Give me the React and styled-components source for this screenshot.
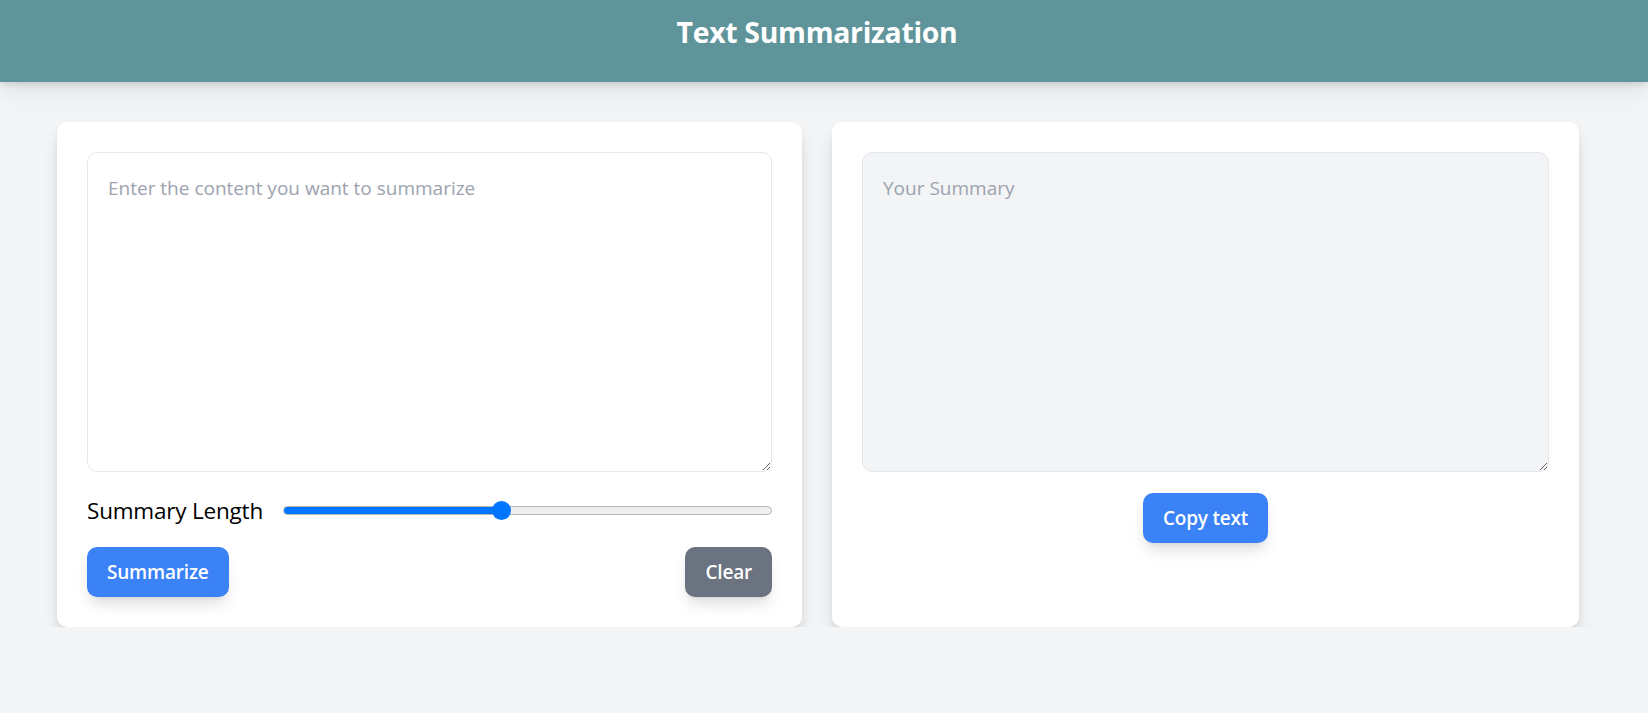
import React, { useState } from "react";
import styled, { createGlobalStyle } from "styled-components";

const GlobalStyle = createGlobalStyle`
  * {
    box-sizing: border-box;
  }

  body {
    margin: 0;
    background: #f3f4f6;
    font-family: "Open Sans", "Noto Sans", sans-serif;
  }
`;

/* 상단 헤더 */
const Header = styled.header`
  height: 82px;
  padding: 13px 14px 0 0;
  background: #5f959a;
  display: flex;
  justify-content: center;
  box-shadow: 0 4px 6px -1px rgba(0, 0, 0, 0.1), 0 8px 22px rgba(0, 0, 0, 0.08);
`;

const Title = styled.h1`
  margin: 0;
  color: #ffffff;
  font-size: 28.4px;
  font-weight: 700;
  letter-spacing: -0.3px;
`;

/* 카드 두 개 */
const Main = styled.main`
  display: grid;
  grid-template-columns: 745px 747px;
  gap: 30px;
  padding: 40px 0 0 57px;
`;

const Card = styled.section`
  background: #ffffff;
  border-radius: 10px;
  padding: 30px;
  display: flex;
  flex-direction: column;
  box-shadow: 0 12px 18px -4px rgba(0, 0, 0, 0.15), 0 4px 8px -2px rgba(0, 0, 0, 0.08);
`;

const TextArea = styled.textarea`
  display: block;
  width: 100%;
  height: 320px;
  padding: 20px;
  border: 1px solid #e5e7eb;
  border-radius: 10px;
  background: ${(p) => (p.$readOnly ? "#f3f4f6" : "#ffffff")};
  font-family: inherit;
  font-size: 19px;
  line-height: 30px;
  color: #111827;
  resize: vertical;
  outline: none;

  &::placeholder {
    color: #9ca3af;
  }
`;

/* 요약 길이 슬라이더 */
const LengthRow = styled.div`
  display: flex;
  align-items: center;
  gap: 20px;
  height: 36px;
  margin-top: 20px;
`;

const Label = styled.label`
  font-size: 22.5px;
  color: #000000;
  white-space: nowrap;
  letter-spacing: -0.2px;
`;

const Range = styled.input`
  -webkit-appearance: none;
  appearance: none;
  flex: 1;
  height: 9px;
  margin: 0;
  border-radius: 5px;
  border: 1px solid #b5b5b5;
  background: ${(p) =>
    `linear-gradient(to right, #0075ff 0 ${p.$fill}%, #efefef ${p.$fill}% 100%)`};

  &::-webkit-slider-thumb {
    -webkit-appearance: none;
    width: 19px;
    height: 19px;
    border-radius: 50%;
    background: #0075ff;
    border: none;
  }
`;

const ButtonRow = styled.div`
  display: flex;
  justify-content: ${(p) => p.$align || "space-between"};
  margin-top: ${(p) => p.$top || "19px"};
`;

const Button = styled.button`
  height: 50px;
  padding: 0 20px;
  border: none;
  border-radius: 10px;
  background: ${(p) => (p.$gray ? "#6b7280" : "#3b82f6")};
  color: #ffffff;
  font-family: inherit;
  font-size: 19px;
  font-weight: 600;
  letter-spacing: -0.2px;
  cursor: pointer;
  box-shadow: 0 10px 15px -3px rgba(0, 0, 0, 0.12), 0 4px 6px -4px rgba(0, 0, 0, 0.1);
`;

const App = () => {
  const [text, setText] = useState("");
  const [length, setLength] = useState(5);
  const [summary, setSummary] = useState("");

  const fill = ((length - 1) / 9) * 100;

  return (
    <>
      <GlobalStyle />
      <Header>
        <Title>Text Summarization</Title>
      </Header>
      <Main>
        <Card>
          <TextArea
            placeholder="Enter the content you want to summarize"
            value={text}
            onChange={(e) => setText(e.target.value)}
          />
          <LengthRow>
            <Label htmlFor="length">Summary Length</Label>
            <Range
              id="length"
              type="range"
              min={1}
              max={10}
              value={length}
              $fill={fill}
              onChange={(e) => setLength(Number(e.target.value))}
            />
          </LengthRow>
          <ButtonRow>
            <Button onClick={() => setSummary(text.slice(0, length * 40))}>Summarize</Button>
            <Button $gray onClick={() => { setText(""); setSummary(""); }}>Clear</Button>
          </ButtonRow>
        </Card>
        <Card>
          <TextArea $readOnly readOnly placeholder="Your Summary" value={summary} />
          <ButtonRow $align="center" $top="21px">
            <Button onClick={() => navigator.clipboard && navigator.clipboard.writeText(summary)}>
              Copy text
            </Button>
          </ButtonRow>
        </Card>
      </Main>
    </>
  );
};

export default App;
